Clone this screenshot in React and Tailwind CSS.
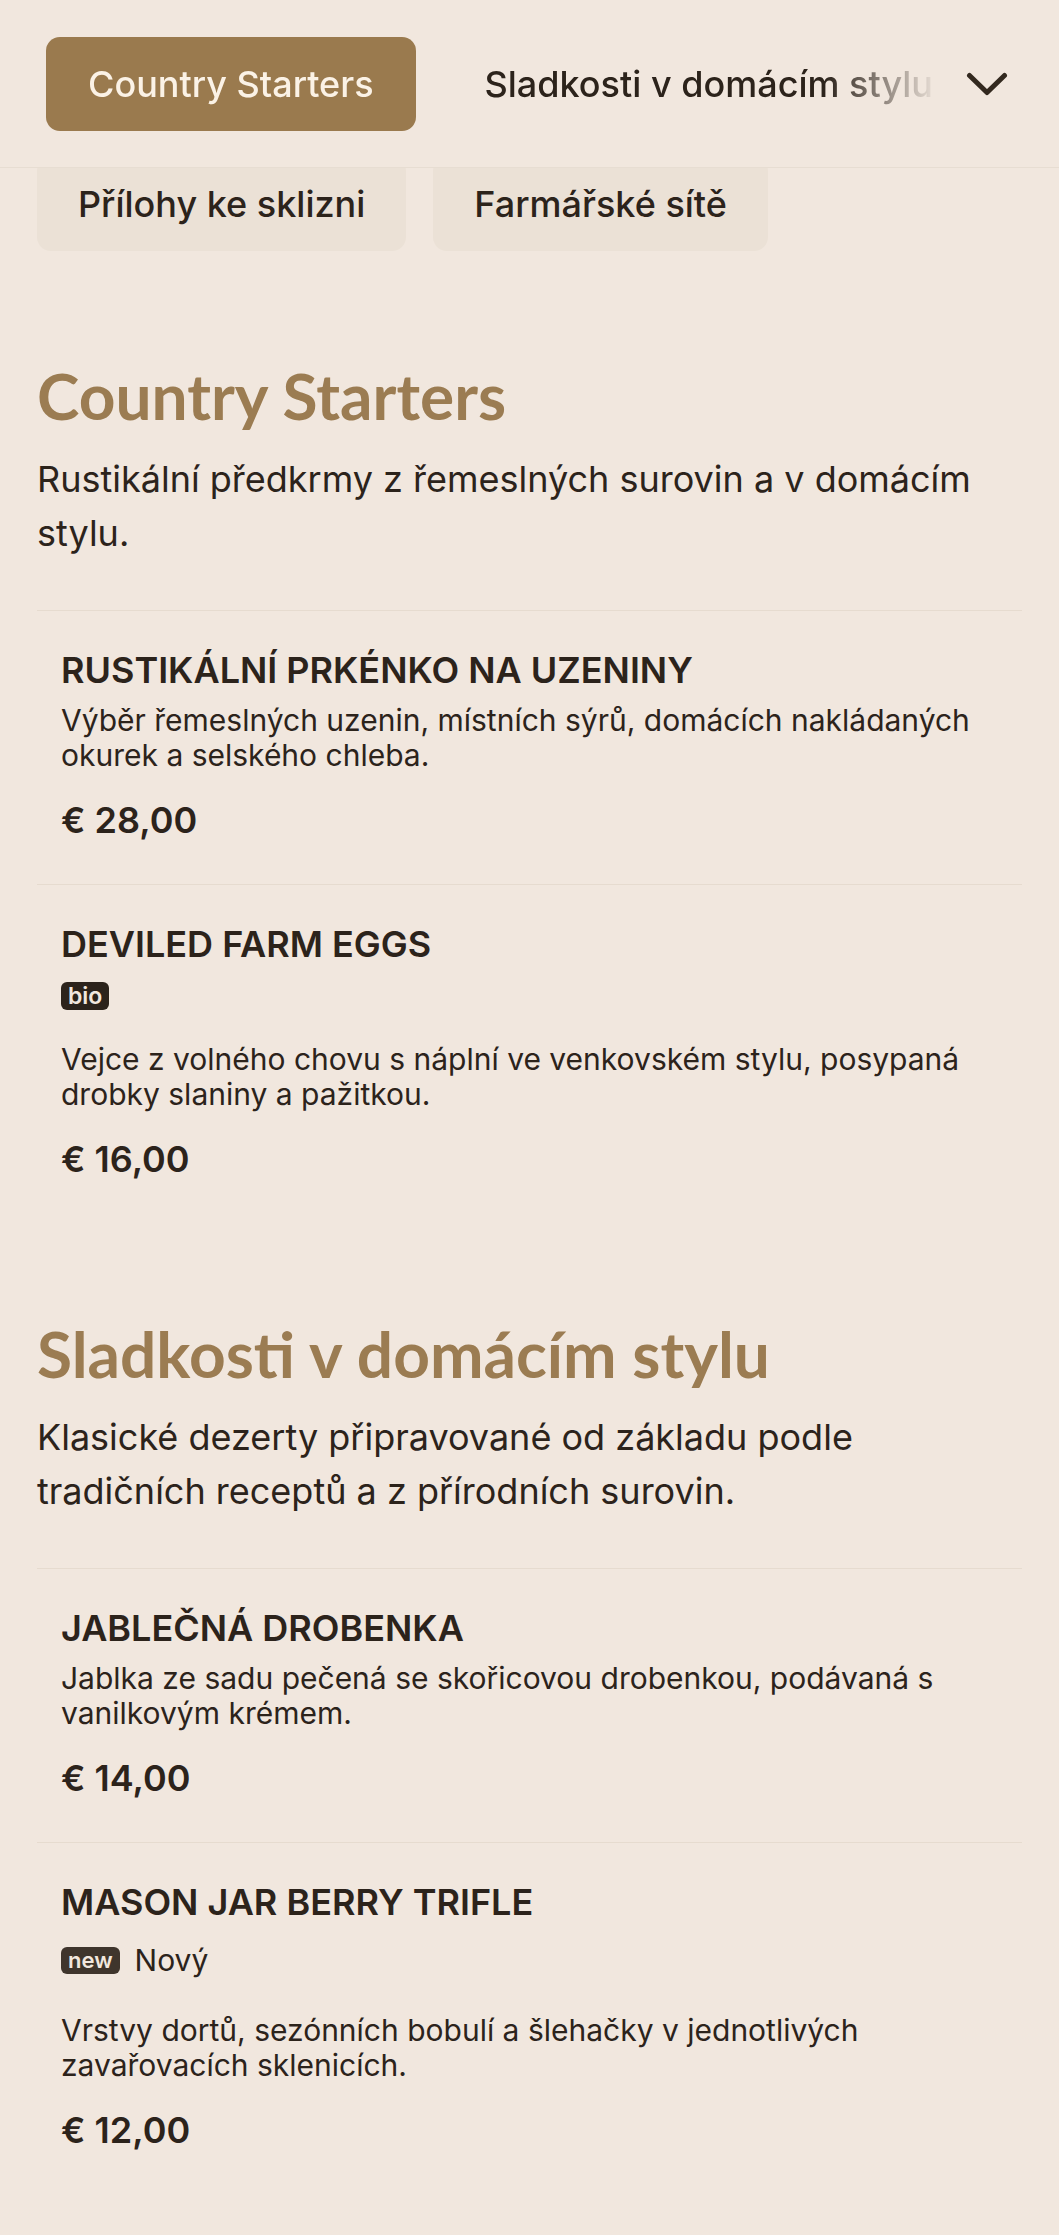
import React from "react";

const sections = [
  {
    title: "Country Starters",
    desc: "Rustikální předkrmy z řemeslných surovin a v domácím stylu.",
    mt: "mt-[109px]",
    items: [
      {
        name: "RUSTIKÁLNÍ PRKÉNKO NA UZENINY",
        desc: "Výběr řemeslných uzenin, místních sýrů, domácích nakládaných okurek a selského chleba.",
        price: "€ 28,00",
      },
      {
        name: "DEVILED FARM EGGS",
        badge: "bio",
        desc: "Vejce z volného chovu s náplní ve venkovském stylu, posypaná drobky slaniny a pažitkou.",
        price: "€ 16,00",
      },
    ],
  },
  {
    title: "Sladkosti v domácím stylu",
    desc: "Klasické dezerty připravované od základu podle tradičních receptů a z přírodních surovin.",
    mt: "mt-[95px]",
    items: [
      {
        name: "JABLEČNÁ DROBENKA",
        desc: "Jablka ze sadu pečená se skořicovou drobenkou, podávaná s vanilkovým krémem.",
        price: "€ 14,00",
      },
      {
        name: "MASON JAR BERRY TRIFLE",
        badge: "new",
        badgeLabel: "Nový",
        desc: "Vrstvy dortů, sezónních bobulí a šlehačky v jednotlivých zavařovacích sklenicích.",
        price: "€ 12,00",
      },
    ],
  },
];

function Item({ item }) {
  return (
    <div className="border-t border-[#e6dbcf] px-[24px] pt-[38px] pb-[43px]">
      <h3 className="text-[36px] leading-[42px] font-semibold text-[#2c231b]">{item.name}</h3>
      {item.badge ? (
        <>
          <div className="mt-[17px] flex items-center gap-[15px]">
            <span
              className={
                item.badge === "bio"
                  ? "inline-flex h-[28px] items-center rounded-[6px] bg-[#2c231b] px-[7px] text-[23px] leading-[28px] font-semibold text-[#f1e7de]"
                  : "inline-flex h-[27px] items-center rounded-[6px] bg-[#3f352c] px-[7px] text-[22px] leading-[27px] font-semibold text-[#f1e7de]"
              }
            >
              {item.badge}
            </span>
            {item.badgeLabel && (
              <span className="text-[30px] leading-[41px] text-[#2c231b]">{item.badgeLabel}</span>
            )}
          </div>
          <p className="mt-[32px] text-[30px] leading-[35px] text-[#2c231b]">{item.desc}</p>
        </>
      ) : (
        <p className="mt-[12px] text-[30px] leading-[35px] text-[#2c231b]">{item.desc}</p>
      )}
      <div className="mt-[26px] text-[36px] leading-[42px] font-semibold text-[#2c231b]">{item.price}</div>
    </div>
  );
}

export default function App() {
  return (
    <div className="min-h-[2235px] bg-[#f1e7de] font-['Inter',sans-serif] text-[#2c231b]">
      <header className="sticky top-0 z-10 flex h-[168px] items-center border-b border-[#e7ddd2] bg-[#f1e7de] pl-[46px] pr-[51px]">
        <div className="min-w-0 flex-1 overflow-hidden [mask-image:linear-gradient(to_right,#000_calc(100%_-_115px),transparent)] [-webkit-mask-image:linear-gradient(to_right,#000_calc(100%_-_115px),transparent)]">
          <div className="flex w-max gap-[27px]">
            <button className="h-[94px] rounded-[14px] bg-[#9a7a4e] px-[42px] text-[36px] font-medium whitespace-nowrap text-[#fbf2e6]">
              Country Starters
            </button>
            <button className="h-[94px] rounded-[14px] px-[42px] text-[36px] font-medium whitespace-nowrap text-[#2c231b]">
              Sladkosti v domácím stylu
            </button>
          </div>
        </div>
        <button className="ml-[26px] flex h-[42px] w-[42px] items-center justify-center">
          <svg width="42" height="24" viewBox="0 0 42 24" fill="none" stroke="#33291f" strokeWidth="5" strokeLinecap="round" strokeLinejoin="round">
            <polyline points="3.5,3.5 21,20.5 38.5,3.5" />
          </svg>
        </button>
      </header>

      <div className="-mt-[11px] flex gap-[27px] px-[37px]">
        <button className="h-[94px] rounded-[14px] bg-[#ebe1d6] px-[41px] text-[36px] font-medium whitespace-nowrap text-[#2c231b]">
          Přílohy ke sklizni
        </button>
        <button className="h-[94px] rounded-[14px] bg-[#ebe1d6] px-[41px] text-[36px] font-medium whitespace-nowrap text-[#2c231b]">
          Farmářské sítě
        </button>
      </div>

      <main className="px-[37px] pb-[40px]">
        {sections.map((s) => (
          <section key={s.title} className={s.mt}>
            <h2 className="font-['Lato',sans-serif] text-[64px] leading-[72px] font-bold text-[#9b7c52]">{s.title}</h2>
            <p className="mt-[20px] max-w-[960px] text-[36px] leading-[54px] text-[#2c231b]">{s.desc}</p>
            <div className="mt-[50px]">
              {s.items.map((it) => (
                <Item key={it.name} item={it} />
              ))}
            </div>
          </section>
        ))}
      </main>
    </div>
  );
}
